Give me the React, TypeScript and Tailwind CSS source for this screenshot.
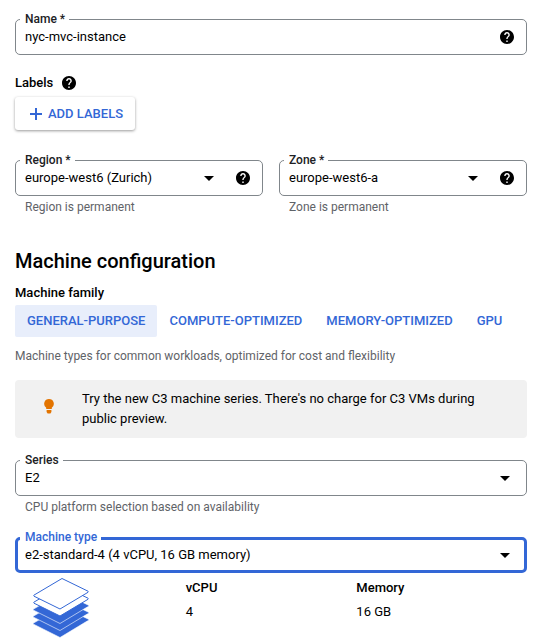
import type { ReactNode } from "react";

function HelpIcon() {
  return (
    <svg viewBox="2 2 20 20" className="size-3.5 fill-black" aria-hidden="true">
      <path d="M12 2C6.48 2 2 6.48 2 12s4.48 10 10 10 10-4.48 10-10S17.52 2 12 2zm1 17h-2v-2h2v2zm2.07-7.75l-.9.92C13.45 12.9 13 13.5 13 15h-2v-.5c0-1.1.45-2.1 1.17-2.83l1.24-1.26c.37-.36.59-.86.59-1.41 0-1.1-.9-2-2-2s-2 .9-2 2H8c0-2.21 1.79-4 4-4s4 1.79 4 4c0 .88-.36 1.68-.93 2.25z" />
    </svg>
  );
}

function HelpButton({ label }: { label: string }) {
  return (
    <button type="button" aria-label={label} className="block shrink-0 rounded-full">
      <HelpIcon />
    </button>
  );
}

function Arrow() {
  return (
    <svg viewBox="0 0 10 5" className="pointer-events-none h-[5px] w-2.5 shrink-0 fill-black" aria-hidden="true">
      <path d="M0 0h10L5 5z" />
    </svg>
  );
}

function BulbIcon() {
  return (
    <svg viewBox="0 0 10 15" className="h-[15px] w-2.5 fill-[#e37400]" aria-hidden="true">
      <path d="M5 0a4.8 4.8 0 0 0-2.8 8.7V10h5.6V8.7A4.8 4.8 0 0 0 5 0z" />
      <path d="M2.6 11h4.8v2l-1 1.4H3.6l-1-1.4z" />
    </svg>
  );
}

function LayersIcon() {
  const filled = [28, 21, 14];
  const outlined = [7, 0];
  return (
    <svg viewBox="0 0 62 64" className="ml-[15px] h-16 w-[62px]" aria-hidden="true">
      {filled.map((y) => (
        <path
          key={y}
          d="M32 2.5L58.5 15.2q.8.6 0 1.1L30 33.5 3.5 20.2q-.8-.6 0-1.1z"
          transform={`translate(0 ${y})`}
          className="fill-[#3367d6] stroke-white"
          strokeWidth="0.6"
        />
      ))}
      {outlined.map((y) => (
        <path
          key={y}
          d="M32 2.5L58 15.2q.8.6 0 1.1L30 33 4 20.2q-.8-.6 0-1.1z"
          transform={`translate(0 ${y})`}
          className="fill-white stroke-[#3367d6]"
          strokeWidth="1"
        />
      ))}
    </svg>
  );
}

type FieldProps = { id: string; label: string; focused?: boolean; children: ReactNode };

function Field({ id, label, focused, children }: FieldProps) {
  return (
    <div
      className={
        focused
          ? "relative flex h-9 items-center rounded-[5px] border-3 border-[#3367d6] pl-[7px]"
          : "relative flex h-9 items-center rounded-[5px] border border-[#80868b] pl-[9px]"
      }
    >
      <label
        htmlFor={id}
        className={
          focused
            ? "absolute -top-[11px] left-0.5 bg-white pr-1 pl-[5px] text-xs leading-4 font-medium text-[#3367d6]"
            : "absolute -top-[9px] left-1 bg-white pr-1 pl-[5px] text-xs leading-4 font-medium text-[#202124]"
        }
      >
        {label}
      </label>
      {children}
    </div>
  );
}

type SelectFieldProps = { id: string; label: string; value: string; help?: string; focused?: boolean };

function SelectField({ id, label, value, help, focused }: SelectFieldProps) {
  return (
    <Field id={id} label={label} focused={focused}>
      <select id={id} className="h-full min-w-0 flex-1 appearance-none bg-transparent outline-none">
        <option>{value}</option>
      </select>
      <div className={focused ? "flex items-center pr-3.5" : help ? "flex items-center gap-[22px] pr-3" : "flex items-center pr-4"}>
        <Arrow />
        {help && <HelpButton label={help} />}
      </div>
    </Field>
  );
}

function Hint({ children }: { children: ReactNode }) {
  return <p className="mt-px pl-2.5 text-xs leading-5 text-[#5f6368]">{children}</p>;
}

const families = ["GENERAL-PURPOSE", "COMPUTE-OPTIMIZED", "MEMORY-OPTIMIZED", "GPU"];

export default function App() {
  return (
    <main className="bg-white pt-[19px] pr-3.5 pl-[15px] font-[Roboto,'Liberation_Sans',sans-serif] text-[13px] leading-5 text-black">
      <Field id="name" label="Name *">
        <input id="name" defaultValue="nyc-mvc-instance" className="h-full min-w-0 flex-1 bg-transparent pb-0.5 outline-none" />
        <div className="pr-3">
          <HelpButton label="About names" />
        </div>
      </Field>

      <section className="mt-[18px]">
        <div className="flex items-center gap-[9px]">
          <h3 className="font-medium">Labels</h3>
          <HelpButton label="About labels" />
        </div>
        <button
          type="button"
          className="mt-1 flex h-[33px] items-center gap-[3px] rounded-[3px] bg-white px-3 font-medium text-[#3367d6] shadow-[0_1px_3px_rgba(0,0,0,0.4)]"
        >
          <svg viewBox="0 0 18 18" className="size-[18px] fill-none stroke-current" strokeWidth="2" aria-hidden="true">
            <path d="M9 3v12M3 9h12" />
          </svg>
          ADD LABELS
        </button>
      </section>

      <div className="mt-[30px] grid grid-cols-2 gap-4">
        <div>
          <SelectField id="region" label="Region *" value="europe-west6 (Zurich)" help="About regions" />
          <Hint>Region is permanent</Hint>
        </div>
        <div>
          <SelectField id="zone" label="Zone *" value="europe-west6-a" help="About zones" />
          <Hint>Zone is permanent</Hint>
        </div>
      </div>

      <h2 className="mt-[30px] text-xl leading-7 font-medium">Machine configuration</h2>
      <h3 className="mt-2 font-medium">Machine family</h3>
      <div role="tablist" className="mt-0.5 flex">
        {families.map((name, i) => (
          <button
            key={name}
            type="button"
            role="tab"
            aria-selected={i === 0}
            className={
              i === 0
                ? "h-8 rounded-xs bg-[#e8eefb] px-3 font-medium whitespace-nowrap text-[#3367d6]"
                : "h-8 px-3 font-medium whitespace-nowrap text-[#3367d6]"
            }
          >
            {name}
          </button>
        ))}
      </div>
      <p className="mt-[9px] text-xs leading-5 text-[#5f6368]">
        Machine types for common workloads, optimized for cost and flexibility
      </p>

      <div className="mt-3.5 flex rounded-[4px] bg-[#f1f1f1] py-[9px] pr-6">
        <div className="flex w-[67px] shrink-0 items-center pb-1.5 pl-[29px]">
          <BulbIcon />
        </div>
        <p>Try the new C3 machine series. There's no charge for C3 VMs during public preview.</p>
      </div>

      <div className="mt-[22px]">
        <SelectField id="series" label="Series" value="E2" />
        <Hint>CPU platform selection based on availability</Hint>
      </div>

      <div className="mt-5">
        <SelectField id="machine-type" label="Machine type" value="e2-standard-4 (4 vCPU, 16 GB memory)" focused />
      </div>

      <div className="mt-[3px] grid grid-cols-3">
        <LayersIcon />
        <dl className="flex flex-col gap-1 pt-0.5">
          <dt className="font-medium">vCPU</dt>
          <dd>4</dd>
        </dl>
        <dl className="flex flex-col gap-1 pt-0.5">
          <dt className="font-medium">Memory</dt>
          <dd>16 GB</dd>
        </dl>
      </div>
    </main>
  );
}
